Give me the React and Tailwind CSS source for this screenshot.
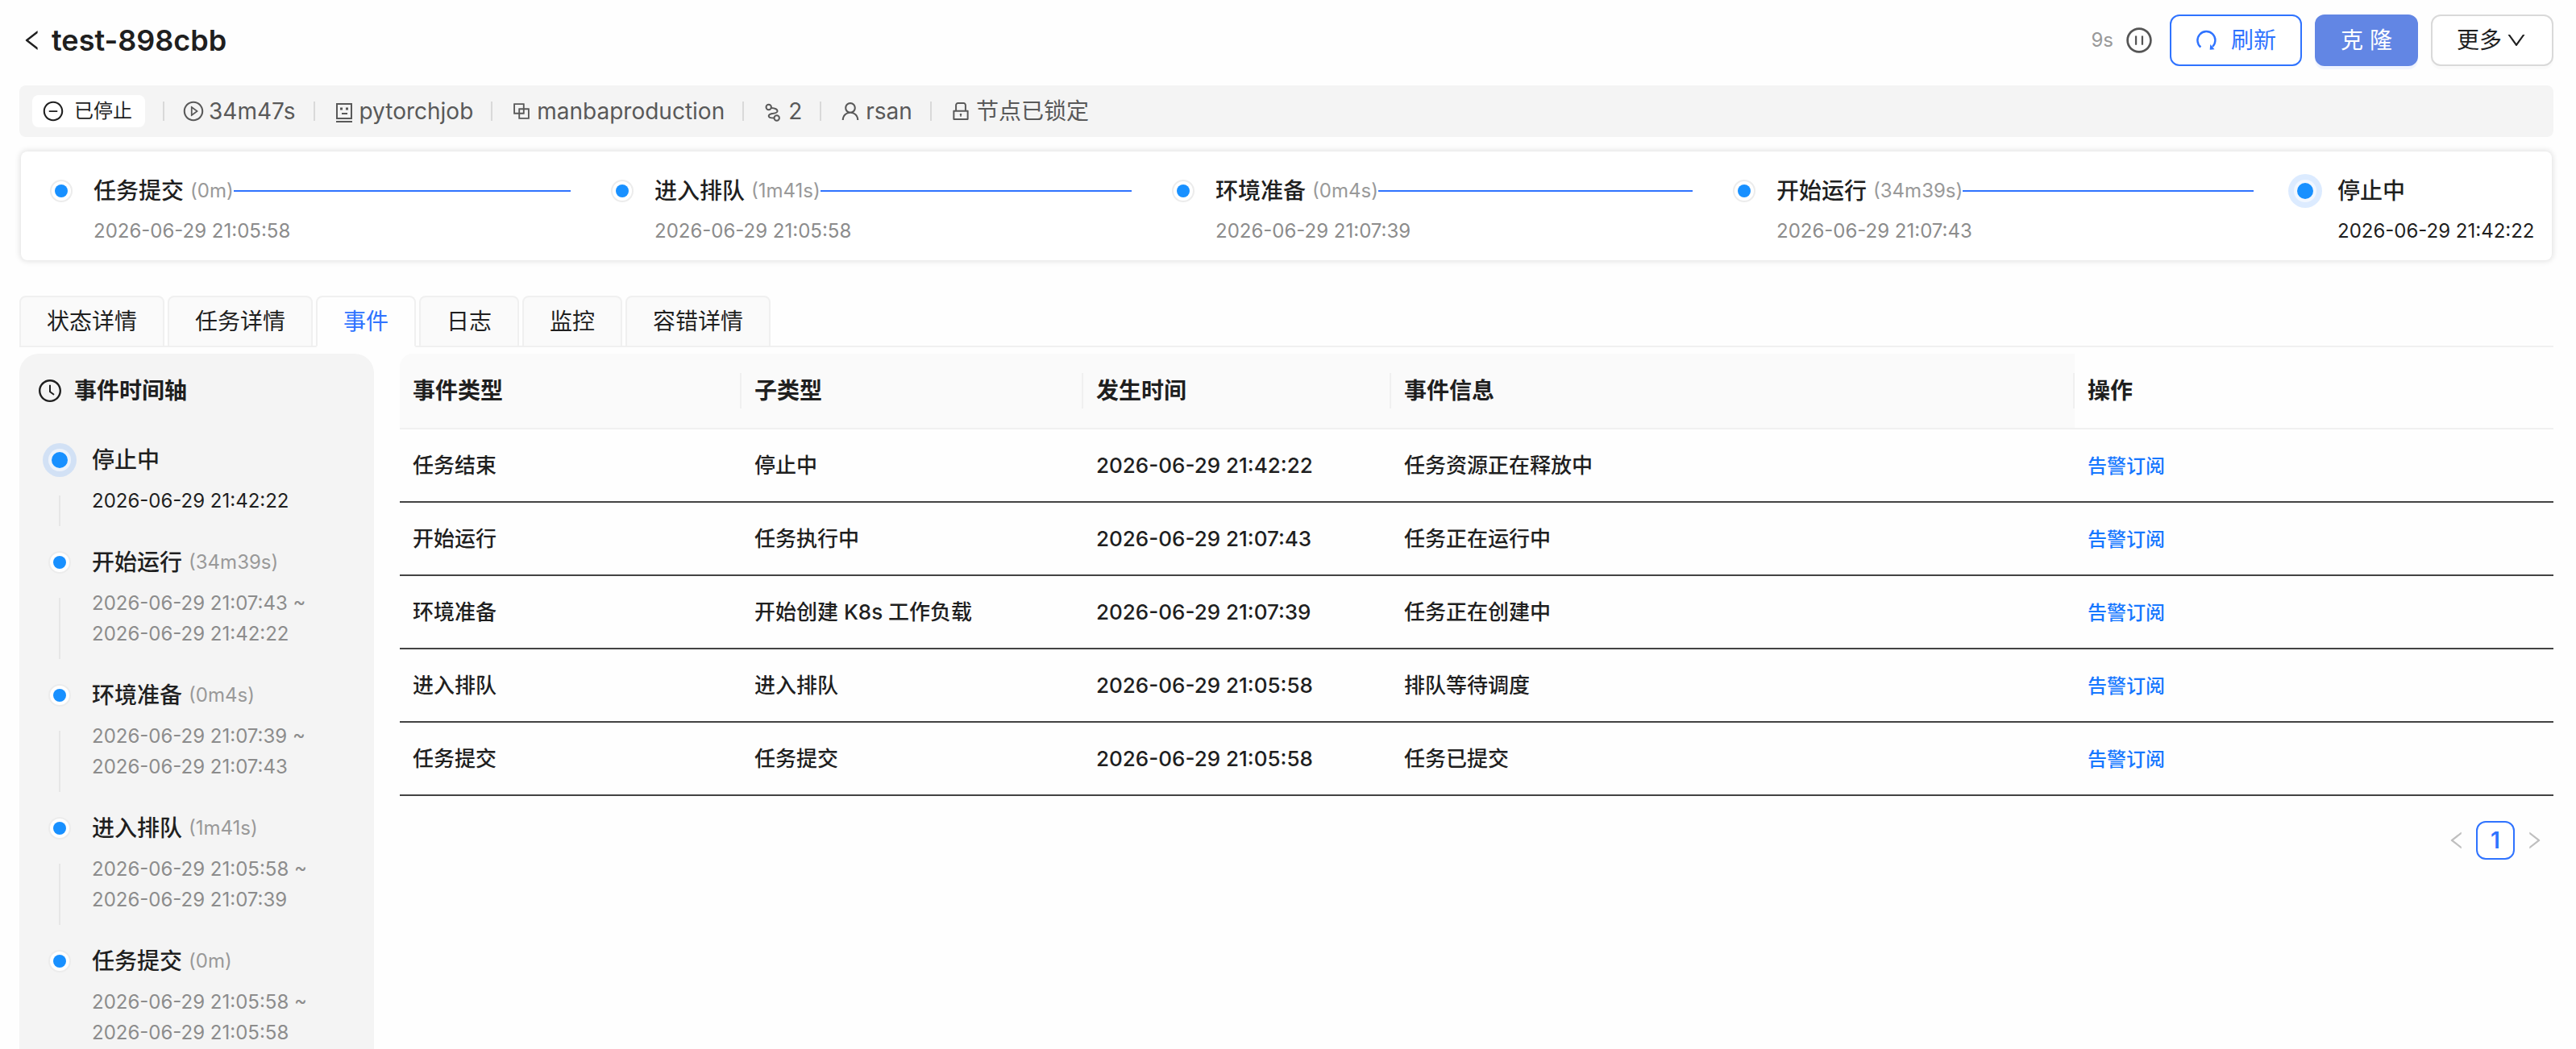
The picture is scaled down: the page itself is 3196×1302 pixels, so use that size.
import React, { useState } from "react";
import {
    AiOutlineBlock,
    AiOutlineClockCircle,
    AiOutlineDown,
    AiOutlineLeft,
    AiOutlineLock,
    AiOutlineMinusCircle,
    AiOutlinePauseCircle,
    AiOutlinePlayCircle,
    AiOutlineRight,
    AiOutlineUser,
} from "react-icons/ai";

const steps = [
    { title: "任务提交", duration: "0m", start: "2026-06-29 21:05:58", end: "2026-06-29 21:05:58" },
    { title: "进入排队", duration: "1m41s", start: "2026-06-29 21:05:58", end: "2026-06-29 21:07:39" },
    { title: "环境准备", duration: "0m4s", start: "2026-06-29 21:07:39", end: "2026-06-29 21:07:43" },
    { title: "开始运行", duration: "34m39s", start: "2026-06-29 21:07:43", end: "2026-06-29 21:42:22" },
    { title: "停止中", start: "2026-06-29 21:42:22", active: true },
];

const events = [
    { type: "任务结束", subType: "停止中", time: "2026-06-29 21:42:22", message: "任务资源正在释放中" },
    { type: "开始运行", subType: "任务执行中", time: "2026-06-29 21:07:43", message: "任务正在运行中" },
    { type: "环境准备", subType: "开始创建 K8s 工作负载", time: "2026-06-29 21:07:39", message: "任务正在创建中" },
    { type: "进入排队", subType: "进入排队", time: "2026-06-29 21:05:58", message: "排队等待调度" },
    { type: "任务提交", subType: "任务提交", time: "2026-06-29 21:05:58", message: "任务已提交" },
];

const tabs = ["状态详情", "任务详情", "事件", "日志", "监控", "容错详情"];

const columns = [
    { title: "事件类型", width: "w-[424px]" },
    { title: "子类型", width: "w-[424px]" },
    { title: "发生时间", width: "w-[382px]" },
    { title: "事件信息", width: "w-[848px]" },
];

const JobIcon = () => (
    <svg className="size-7" viewBox="0 0 28 28" fill="none" stroke="currentColor" strokeWidth="2">
        <rect x="5" y="5" width="18" height="18" />
        <path d="M4 27h20M11 17h7" />
        <path d="M9 11h3M16 11h3" strokeWidth="3" />
    </svg>
);

const RestartIcon = () => (
    <svg className="size-7" viewBox="0 0 28 28" fill="none" stroke="currentColor" strokeWidth="2">
        <circle cx="8.7" cy="9" r="3.2" />
        <circle cx="18.7" cy="22.5" r="3.2" />
        <path d="M12 10c3 .2 7 .8 7.500 3.500.4 2.500-2 2.800-5 3.300-3 .4-5.800.8-5.800 3.200 0 2.200 3.500 2.500 6.800 2.500" />
    </svg>
);

const RefreshIcon = () => (
    <svg className="size-7" viewBox="0 0 28 28" fill="none" stroke="currentColor" strokeWidth="2.400">
        <path d="M6.400 22.500A11 11 0 1 1 21 22" />
        <path d="M18.200 19l5.300 6.200-5.800.6z" fill="currentColor" stroke="none" />
    </svg>
);

const Dot = ({ active }) => {
    if (active) {
        return (
            <span className="flex size-[42px] items-center justify-center rounded-full bg-[#1677ff]/15">
                <span className="flex size-7 items-center justify-center rounded-full bg-white/60">
                    <span className="size-5 rounded-full bg-[#1890ff]" />
                </span>
            </span>
        );
    }
    return (
        <span className="flex size-7 items-center justify-center rounded-full border-2 border-[#ececec] bg-white">
            <span className="size-4 rounded-full bg-[#1890ff]" />
        </span>
    );
};

const InfoItem = ({ icon, children }) => (
    <>
        <span className="mx-[22px] h-6 w-0.5 bg-[#d9d9d9]" />
        <span className="flex items-center gap-[5px]">
            {icon}
            {children}
        </span>
    </>
);

const Header = () => (
    <header className="flex h-16 items-center justify-between">
        <div className="flex items-center">
            <button aria-label="返回" className="mr-2 text-[32px]">
                <AiOutlineLeft />
            </button>
            <h1 className="text-4xl font-semibold">test-898cbb</h1>
        </div>
        <div className="flex items-center">
            <span className="mr-[14px] text-2xl text-[#999999]">9s</span>
            <button aria-label="暂停" className="mr-5 text-4xl text-[#555555]">
                <AiOutlinePauseCircle />
            </button>
            <button className="mr-4 flex h-16 items-center gap-4 rounded-xl border-2 border-[#2f73ff] bg-white px-[30px] text-[28px] text-[#2f73ff]">
                <RefreshIcon />
                刷新
            </button>
            <button className="mr-4 h-16 w-32 rounded-xl bg-[#6286e4] text-[28px] text-white shadow-[0_4px_0_#f0f4ff]">
                克 隆
            </button>
            <button className="flex h-16 items-center gap-1 rounded-xl border-2 border-[#d9d9d9] bg-white px-[30px] text-[28px] shadow-[0_4px_0_#fafafa]">
                更多
                <AiOutlineDown />
            </button>
        </div>
    </header>
);

const InfoBar = () => (
    <div className="mt-6 flex h-16 items-center rounded-lg bg-[#f4f4f4] px-4 text-[28px] text-[#595959]">
        <span className="flex h-10 items-center gap-3 rounded-lg bg-white pr-4 pl-3 text-2xl text-[#1f1f1f]">
            <AiOutlineMinusCircle className="size-7" />
            已停止
        </span>
        <InfoItem icon={<AiOutlinePlayCircle />}>34m47s</InfoItem>
        <InfoItem icon={<JobIcon />}>pytorchjob</InfoItem>
        <InfoItem icon={<AiOutlineBlock />}>manbaproduction</InfoItem>
        <InfoItem icon={<RestartIcon />}>2</InfoItem>
        <InfoItem icon={<AiOutlineUser />}>rsan</InfoItem>
        <InfoItem icon={<AiOutlineLock />}>节点已锁定</InfoItem>
    </div>
);

const StepBar = () => (
    <ol className="mx-0.5 mt-[18px] flex rounded-lg bg-white px-5 pt-[27px] pb-4 shadow-[0_0_6px_2px_rgba(0,0,0,0.1)]">
        {steps.map((step) => (
            <li key={step.title} className={`flex ${step.active ? "w-[316px]" : "flex-1"}`}>
                <div className="mr-[10px] flex h-11 w-[60px] items-center justify-center">
                    <Dot active={step.active} />
                </div>
                <div className="flex-1">
                    <div className="flex h-11 items-center">
                        <span className="text-[28px] font-medium">{step.title}</span>
                        {step.duration && (
                            <>
                                <span className="ml-2 text-2xl text-[#999999]">({step.duration})</span>
                                <span className="mr-[34px] h-0.5 flex-1 bg-[#2f73ff]" />
                            </>
                        )}
                    </div>
                    <div className={`mt-2 h-10 text-2xl leading-10 whitespace-nowrap ${step.active ? "" : "text-[#8c8c8c]"}`}>
                        {step.start}
                    </div>
                </div>
            </li>
        ))}
    </ol>
);

const Timeline = () => (
    <aside className="w-[440px] shrink-0 rounded-t-3xl bg-[#f4f4f4] px-[22px] pt-6">
        <h2 className="flex h-11 items-center gap-[14px] text-[28px] font-semibold">
            <AiOutlineClockCircle className="size-8" />
            事件时间轴
        </h2>
        <ol className="mt-[42px]">
            {[...steps].reverse().map((step, i) => (
                <li key={step.title} className="flex pb-[35px]">
                    <div className="mr-3 flex w-14 flex-col items-center">
                        <div className="flex h-11 items-center">
                            <Dot active={step.active} />
                        </div>
                        {i < steps.length - 1 && <div className="mt-[22px] -mb-3 w-0.5 flex-1 bg-[#e6e6e6]" />}
                    </div>
                    <div>
                        <div className="flex h-11 items-center">
                            <span className="text-[28px] font-medium">{step.title}</span>
                            {step.duration && <span className="ml-2 text-2xl text-[#999999]">({step.duration})</span>}
                        </div>
                        <div className={`mt-[10px] text-2xl leading-[38px] ${step.active ? "" : "text-[#8c8c8c]"}`}>
                            <div>{step.start}{step.end && " ~"}</div>
                            {step.end && <div>{step.end}</div>}
                        </div>
                    </div>
                </li>
            ))}
        </ol>
    </aside>
);

const EventTable = () => (
    <section className="min-w-0 flex-1">
        <table className="w-full table-fixed border-separate border-spacing-0 text-left">
            <thead>
                <tr className="h-[94px] text-[28px]">
                    {columns.map((col) => (
                        <th
                            key={col.title}
                            className={`${col.width} border-b-2 border-[#f0f0f0] bg-[#fafafa] pl-4 font-semibold first:rounded-tl-2xl`}
                        >
                            <div className="h-11 border-r-2 border-[#f0f0f0] leading-11">{col.title}</div>
                        </th>
                    ))}
                    <th className="border-b-2 border-[#f0f0f0] pl-4 font-semibold">操作</th>
                </tr>
            </thead>
            <tbody>
                {events.map((ev) => (
                    <tr key={ev.type} className="h-[91px] text-[26px] font-medium">
                        <td className="border-b-2 border-[#434343] pl-4">{ev.type}</td>
                        <td className="border-b-2 border-[#434343] pl-4">{ev.subType}</td>
                        <td className="border-b-2 border-[#434343] pl-4">{ev.time}</td>
                        <td className="border-b-2 border-[#434343] pl-4">{ev.message}</td>
                        <td className="border-b-2 border-[#434343] pl-4">
                            <a href="#subscribe" className="text-2xl text-[#1677ff]">告警订阅</a>
                        </td>
                    </tr>
                ))}
            </tbody>
        </table>

        <nav className="mt-[31px] flex justify-end">
            <button aria-label="上一页" className="flex size-12 items-center justify-center text-[28px] text-[#bfbfbf]">
                <AiOutlineLeft />
            </button>
            <button className="size-12 rounded-xl border-2 border-[#2f73ff] bg-white text-[28px] leading-11 font-semibold text-[#2f73ff]">
                1
            </button>
            <button aria-label="下一页" className="flex size-12 items-center justify-center text-[28px] text-[#bfbfbf]">
                <AiOutlineRight />
            </button>
        </nav>
    </section>
);

const App = () => {
    const [activeTab, setActiveTab] = useState("事件");

    return (
        <div className="flex h-screen flex-col overflow-hidden bg-[#fefefe] pt-[18px] pr-7 pl-6 font-['Inter','Noto_Sans_CJK_SC',sans-serif] text-[#1f1f1f]">
            <Header />
            <InfoBar />
            <StepBar />

            {/* Tabs */}
            <div role="tablist" className="mt-11 flex shrink-0 items-end gap-1 shadow-[inset_0_-2px_0_#f0f0f0]">
                {tabs.map((tab) => (
                    <button
                        key={tab}
                        role="tab"
                        aria-selected={activeTab === tab}
                        onClick={() => setActiveTab(tab)}
                        className={`h-16 rounded-t-lg border-2 border-[#f0f0f0] px-8 text-[28px] leading-[60px] ${
                            activeTab === tab ? "border-b-[#fefefe] bg-[#fefefe] text-[#2f73ff]" : "bg-[#fafafa]"
                        }`}
                    >
                        {tab}
                    </button>
                ))}
            </div>

            <main className="mt-2 flex min-h-0 flex-1 gap-8">
                <Timeline />
                <EventTable />
            </main>
        </div>
    );
};

export default App;
